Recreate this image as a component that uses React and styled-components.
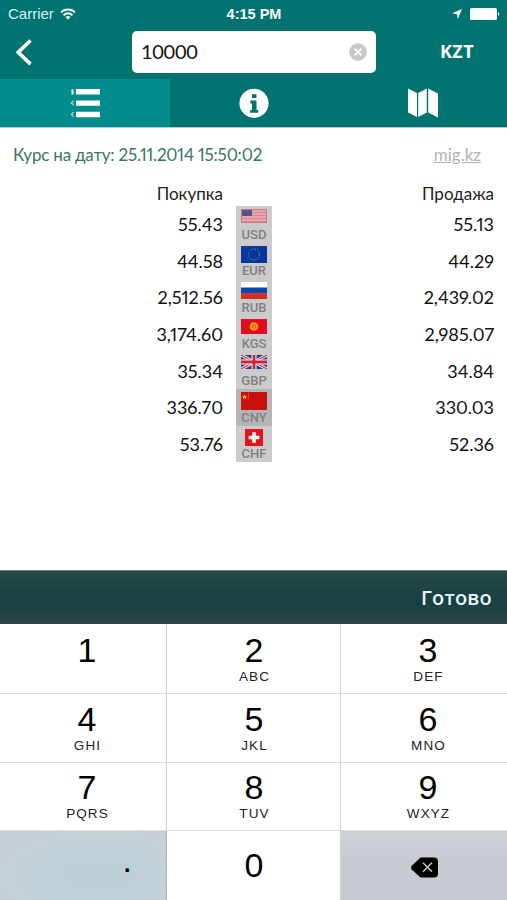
import React, { useState } from 'react';
import styled, { createGlobalStyle } from 'styled-components';

const GlobalStyle = createGlobalStyle`
  * {
    box-sizing: border-box;
  }

  body {
    margin: 0;
    background: #fff;
    font-family: Lato, 'Open Sans', sans-serif;
  }

  button,
  input {
    font: inherit;
    border: none;
    padding: 0;
    margin: 0;
    outline: none;
  }
`;

const StyledScreen = styled.div`
  width: 100%;
  height: 900px;
  display: flex;
  flex-direction: column;
  overflow: hidden;
`;

const StyledHeader = styled.header`
  height: 128px;
  flex-shrink: 0;
  background: #007270;
  border-bottom: 1px solid #a9d0cf;
  color: #fff;
`;

const StyledStatusBar = styled.div`
  height: 27px;
  display: grid;
  grid-template-columns: 1fr auto 1fr;
  align-items: center;
  padding: 0 7px 0 8px;
  font: 15px 'Liberation Sans', Arial, sans-serif;
`;

const StyledCarrier = styled.div`
  display: flex;
  align-items: center;
  gap: 6px;
  color: #d5f3f0;
`;

const StyledTime = styled.div`
  font-size: 14.5px;
  font-weight: bold;
`;

const StyledIndicators = styled.div`
  display: flex;
  align-items: center;
  justify-content: flex-end;
  gap: 8px;
`;

const StyledNavBar = styled.div`
  height: 52px;
  display: flex;
  align-items: center;
  padding: 0 33px 2px 15px;
`;

const StyledBackButton = styled.button`
  width: 117px;
  height: 28px;
  display: flex;
  background: none;
`;

const StyledAmount = styled.label`
  width: 244px;
  height: 42px;
  display: flex;
  align-items: center;
  padding: 0 9px;
  border-radius: 5px;
  background: #fff;
`;

const StyledInput = styled.input`
  flex: 1;
  min-width: 0;
  height: 30px;
  margin-top: -2px;
  background: none;
  color: #161616;
  font-size: 20px;
  letter-spacing: -0.3px;
`;

const StyledClearButton = styled.button`
  width: 18px;
  height: 18px;
  display: flex;
  background: none;
`;

const StyledCurrency = styled.div`
  flex: 1;
  padding-bottom: 2px;
  text-align: right;
  font-family: 'Open Sans', sans-serif;
  font-size: 18px;
  font-weight: 700;
  letter-spacing: 0.4px;
`;

const StyledTabs = styled.nav`
  height: 48px;
  display: grid;
  grid-template-columns: 170px 168px 169px;
`;

const StyledTab = styled.button`
  display: flex;
  align-items: center;
  justify-content: center;
  background: ${({ $active }) => ($active ? '#028c8b' : 'transparent')};
  color: #fff;
`;

const StyledRates = styled.main`
  flex: 1;
  padding: 0 13px;
  font-variant-numeric: proportional-nums;
`;

const StyledInfo = styled.div`
  height: 54px;
  display: flex;
  align-items: center;
  justify-content: space-between;
  padding: 0 13px 2px 0;
  font-size: 17px;
  letter-spacing: -0.2px;
  color: #3a7567;
`;

const StyledLink = styled.a`
  color: #b2b2b2;
  letter-spacing: 0;
  text-decoration: underline;
`;

const StyledHeadings = styled.div`
  height: 24px;
  display: grid;
  grid-template-columns: 210px 1fr;
  align-items: center;
  padding-bottom: 2px;
  text-align: right;
  font-size: 17px;
  color: #222;
`;

const StyledRow = styled.div`
  height: 36.6px;
  display: grid;
  grid-template-columns: 210px 13px 36px 1fr;
  align-items: center;
  text-align: right;
  font-size: 18px;
  color: #111;
`;

const StyledFlag = styled.div`
  grid-column: 3;
  height: 100%;
  display: flex;
  flex-direction: column;
  align-items: center;
  justify-content: space-between;
  padding: 3px 0 1px;
  background: ${({ $selected }) => ($selected ? '#b5b5b5' : '#cbcbcb')};
  color: #808080;
  font: 500 13px/15px Roboto, sans-serif;
`;

const StyledToolbar = styled.div`
  height: 54px;
  flex-shrink: 0;
  display: flex;
  align-items: center;
  justify-content: flex-end;
  padding: 0 15px 0 0;
  border-top: 1px solid #688480;
  background: linear-gradient(#2b4847, #1a4142 45%, #1a4142 65%, #2b4645);
`;

const StyledDoneButton = styled.button`
  background: none;
  color: #e9f8fa;
  font-family: 'Open Sans', sans-serif;
  font-size: 20px;
  font-weight: 600;
  letter-spacing: 0.2px;
`;

const StyledKeypad = styled.div`
  height: 276px;
  flex-shrink: 0;
  display: grid;
  grid-template-columns: 167px 174px 166px;
  grid-template-rows: 70px 69px 68px 69px;
`;

const StyledKey = styled.button`
  display: flex;
  flex-direction: column;
  align-items: center;
  justify-content: flex-start;
  padding: 5px 0 0 8px;
  border-right: 1px solid #d0d0d0;
  border-bottom: 1px solid #dcdcdc;
  background: #fff;
  color: #000;
  font: 34px/40px 'Liberation Sans', Arial, sans-serif;

  &:nth-child(-n + 3) {
    padding-top: 6px;
  }

  &:nth-child(3n) {
    border-right: none;
  }

  &:nth-child(3n + 2) {
    padding-left: 1px;
  }

  &:nth-child(n + 7) {
    padding-top: 4px;
  }

  &:nth-child(n + 10) {
    padding-top: 14px;
    border-bottom: none;
  }
`;

const StyledLetters = styled.span`
  margin-left: 1px;
  font-size: 13.5px;
  line-height: 14px;
  letter-spacing: 1.1px;
  color: #222;
`;

const StyledDotKey = styled(StyledKey)`
  align-items: flex-end;
  border-right-color: #aeb6bd;
  background: radial-gradient(ellipse at 60% 65%, #bdd0d8 25%, #c4d1d7 65%, #c8cdd4);

  &:nth-child(n + 10) {
    padding: 9px 34px 0 0;
  }
`;

const StyledDeleteKey = styled(StyledKey)`
  justify-content: center;
  background: linear-gradient(#ccd2d6, #c7ccd3 40%);

  &:nth-child(n + 10) {
    padding: 3px 0 0 2px;
  }
`;

const WifiIcon = () => (
  <svg width="16" height="12" viewBox="0 0 16 12" fill="none" stroke="#fff" strokeWidth="2">
    <path d="M1 4.4a10 10 0 0 1 14 0M3.6 7.2a6.2 6.2 0 0 1 8.8 0" />
    <path d="M8 11.7 5.5 9.1a3.6 3.6 0 0 1 5 0z" fill="#fff" stroke="none" />
  </svg>
);

const LocationIcon = () => (
  <svg width="10" height="10" viewBox="0 0 10 10" fill="#fff">
    <path d="M10 0 5.8 10 5 5.2 0 4.3z" />
  </svg>
);

const BatteryIcon = () => (
  <svg width="30" height="12" viewBox="0 0 30 12" fill="#fff">
    <rect width="27" height="12" rx="1.5" />
    <path d="M28 4a2.3 2.3 0 0 1 0 4z" />
  </svg>
);

const BackIcon = () => (
  <svg width="18" height="28" viewBox="0 0 18 28" fill="none" stroke="#fff" strokeWidth="3.6">
    <path d="M15.5 2.5 3.2 14.3l12.3 11.8" />
  </svg>
);

const ClearIcon = () => (
  <svg width="18" height="18" viewBox="0 0 18 18">
    <circle cx="9" cy="9" r="8.8" fill="#c8c8c8" />
    <path d="m5.6 5.6 6.8 6.8m0-6.8-6.8 6.8" stroke="#fff" strokeWidth="1.8" />
  </svg>
);

const ListIcon = () => (
  <svg width="30" height="30" viewBox="0 0 30 30" fill="currentColor">
    <path d="M6 1h24v5.6H6zM6 12.5h24v5.2H6zM6 23.8h24v5.4H6z" />
    <g fill="none" stroke="currentColor" strokeWidth="1" opacity="0.75">
      <path d="M3.8 2.2H1.5v1.6h2v1.8H1M2.5 1.2v5.6" />
      <path d="M4 13.2c-3-.6-3 4.4 0 3.8M.7 15.1h2.6M4 24.6c-3-.8-3 4.4 0 3.8M1 26.5h2" />
    </g>
  </svg>
);

const InfoIcon = () => (
  <svg width="30" height="30" viewBox="0 0 30 30">
    <circle cx="15" cy="15.3" r="14.6" fill="currentColor" />
    <path d="M13 6.3h4.5v3.8H13zM11.3 12.5h6.2V22h1.7v2.8h-8V22H13v-6.6h-1.7z" fill="#007270" />
  </svg>
);

const MapIcon = () => (
  <svg width="30" height="30" viewBox="0 0 30 30" fill="currentColor">
    <path d="M0 .5 9 5v24L0 24.5zM10.2 5l8.6-4.5v24L10.2 29zM20.2.5 30 5.5v24l-9.8-5z" />
  </svg>
);

const DeleteIcon = () => (
  <svg width="28" height="21" viewBox="0 0 28 21">
    <path d="M9.5.5H23a4 4 0 0 1 4 4v12a4 4 0 0 1-4 4H9.5L.5 12.2Q-.3 10.5.5 9z" />
    <path d="m12 5.8 9 9m0-9-9 9" stroke="#c8cdd4" strokeWidth="1.4" />
  </svg>
);

const FLAGS = {
  USD: (
    <>
      <path fill="#e5a5ad" d="M0 0h26v14H0z" />
      <path stroke="#df8490" d="M0 .5h26M0 3.5h26M0 6.5h26M0 9.5h26M0 12.5h26" />
      <path fill="#56528a" d="M0 0h11v7H0z" />
      <path fill="none" stroke="#b98289" d="M.5.5h25v13H.5z" />
    </>
  ),
  EUR: (
    <>
      <path fill="#07379e" d="M0 0h26v17H0z" />
      <circle cx="13" cy="8.5" r="5.5" fill="none" stroke="#7c925e" strokeDasharray="1.4 1.48" />
    </>
  ),
  RUB: (
    <>
      <path fill="#fff" d="M0 0h26v6H0z" />
      <path fill="#0745b0" d="M0 5.5h26v6H0z" />
      <path fill="#d52f22" d="M0 11.2h26V17H0z" />
    </>
  ),
  KGS: (
    <>
      <path fill="#e20b20" d="M0 0h26v15H0z" />
      <circle cx="13" cy="7.5" r="4.3" fill="#f39a18" />
      <circle cx="13" cy="7.5" r="1.8" fill="none" stroke="#e0521d" />
    </>
  ),
  GBP: (
    <>
      <path fill="#2b3f86" d="M0 0h26v14H0z" />
      <path stroke="#eceaf0" strokeWidth="3.2" d="m0 0 26 14M26 0 0 14" />
      <path stroke="#d0364b" strokeWidth="1.2" d="m0 0 26 14M26 0 0 14" />
      <path stroke="#f3f1f4" strokeWidth="5" d="M13 0v14M0 7h26" />
      <path stroke="#ce2038" strokeWidth="2.8" d="M13 0v14M0 7h26" />
    </>
  ),
  CNY: (
    <>
      <path fill="#c9100c" d="M0 0h26v18H0z" />
      <path fill="#f5b51a" d="m3.5 2.5.8 1.6 1.8.1-1.3 1.2.4 1.8-1.7-.9-1.6.9.4-1.8L1 4.2l1.8-.1z" />
      <path stroke="#e78c18" strokeDasharray="1 1.3" d="M7.5 1.5v6.5" />
    </>
  ),
  CHF: (
    <>
      <path fill="#e5121d" d="M4 0h18v17H4z" />
      <path stroke="#fff" strokeWidth="3.6" d="M13 3.2v10.6M7.6 8.5h10.8" />
    </>
  ),
};

const FLAG_HEIGHTS = { USD: 14, EUR: 17, RUB: 17, KGS: 15, GBP: 14, CNY: 18, CHF: 17 };

const RATES = [
  { code: 'USD', buy: '55.43', sell: '55.13' },
  { code: 'EUR', buy: '44.58', sell: '44.29' },
  { code: 'RUB', buy: '2,512.56', sell: '2,439.02' },
  { code: 'KGS', buy: '3,174.60', sell: '2,985.07' },
  { code: 'GBP', buy: '35.34', sell: '34.84' },
  { code: 'CNY', buy: '336.70', sell: '330.03' },
  { code: 'CHF', buy: '53.76', sell: '52.36' },
];

const KEYS = [
  ['1', ''],
  ['2', 'ABC'],
  ['3', 'DEF'],
  ['4', 'GHI'],
  ['5', 'JKL'],
  ['6', 'MNO'],
  ['7', 'PQRS'],
  ['8', 'TUV'],
  ['9', 'WXYZ'],
];

const TABS = [
  { name: 'rates', Icon: ListIcon },
  { name: 'info', Icon: InfoIcon },
  { name: 'map', Icon: MapIcon },
];

const App = () => {
  const [amount, setAmount] = useState('10000');
  const [tab, setTab] = useState('rates');

  const handleKey = key => setAmount(prevState => prevState + key);
  const handleDelete = () => setAmount(prevState => prevState.slice(0, -1));

  return (
    <>
      <GlobalStyle />
      <StyledScreen>
        <StyledHeader>
          <StyledStatusBar>
            <StyledCarrier>
              Carrier
              <WifiIcon />
            </StyledCarrier>
            <StyledTime>4:15 PM</StyledTime>
            <StyledIndicators>
              <LocationIcon />
              <BatteryIcon />
            </StyledIndicators>
          </StyledStatusBar>
          <StyledNavBar>
            <StyledBackButton>
              <BackIcon />
            </StyledBackButton>
            <StyledAmount>
              <StyledInput value={amount} onChange={({ target: { value } }) => setAmount(value)} />
              <StyledClearButton onClick={() => setAmount('')}>
                <ClearIcon />
              </StyledClearButton>
            </StyledAmount>
            <StyledCurrency>KZT</StyledCurrency>
          </StyledNavBar>
          <StyledTabs>
            {TABS.map(({ name, Icon }) => (
              <StyledTab key={name} $active={tab === name} onClick={() => setTab(name)}>
                <Icon />
              </StyledTab>
            ))}
          </StyledTabs>
        </StyledHeader>
        <StyledRates>
          <StyledInfo>
            <span>Курс на дату: 25.11.2014 15:50:02</span>
            <StyledLink>mig.kz</StyledLink>
          </StyledInfo>
          <StyledHeadings>
            <span>Покупка</span>
            <span>Продажа</span>
          </StyledHeadings>
          {RATES.map(({ code, buy, sell }) => (
            <StyledRow key={code}>
              <span>{buy}</span>
              <StyledFlag $selected={code === 'CNY'}>
                <svg width="26" height={FLAG_HEIGHTS[code]}>
                  {FLAGS[code]}
                </svg>
                {code}
              </StyledFlag>
              <span>{sell}</span>
            </StyledRow>
          ))}
        </StyledRates>
        <StyledToolbar>
          <StyledDoneButton>Готово</StyledDoneButton>
        </StyledToolbar>
        <StyledKeypad>
          {KEYS.map(([digit, letters]) => (
            <StyledKey key={digit} onClick={() => handleKey(digit)}>
              {digit}
              <StyledLetters>{letters}</StyledLetters>
            </StyledKey>
          ))}
          <StyledDotKey onClick={() => handleKey('.')}>.</StyledDotKey>
          <StyledKey onClick={() => handleKey('0')}>0</StyledKey>
          <StyledDeleteKey onClick={handleDelete}>
            <DeleteIcon />
          </StyledDeleteKey>
        </StyledKeypad>
      </StyledScreen>
    </>
  );
};

export default App;
